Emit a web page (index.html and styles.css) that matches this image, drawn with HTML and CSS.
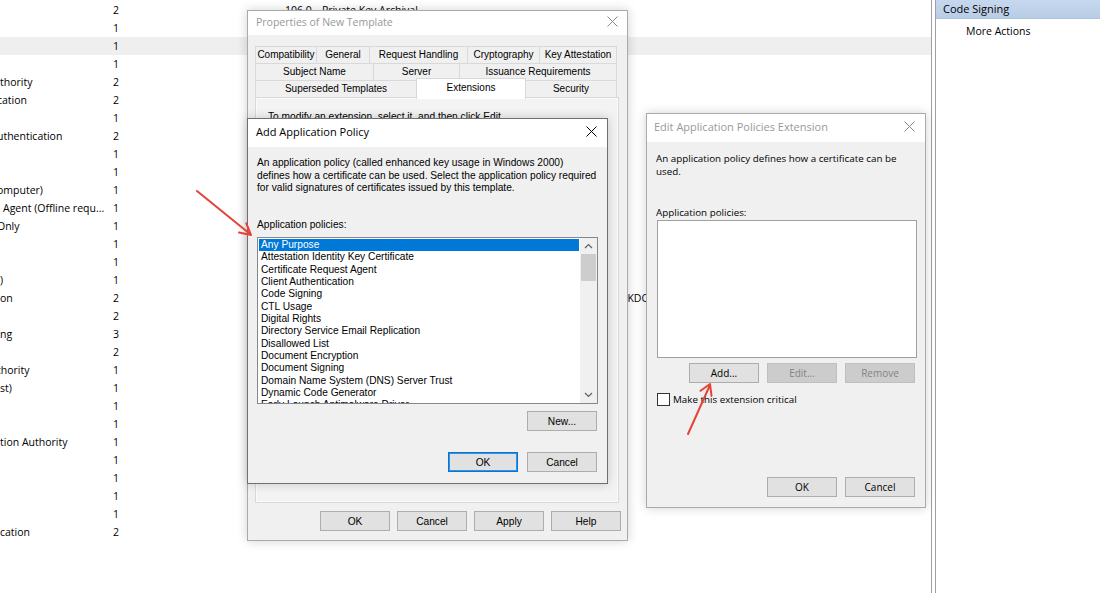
FILE: index.html
```html
<!DOCTYPE html>
<html lang="en">
<head>
    <meta charset="UTF-8">
    <title>Certificate Templates</title>
    <link rel="stylesheet" href="styles.css">
</head>
<body>

    <div class="escritorio">
        <div class="consola">
            <div class="lista">
                <div class="fila"><span class="nombre"></span><span class="num">2</span><span class="ver">106.0</span><span class="uso">Private Key Archival</span></div>
                <div class="fila"><span class="nombre"></span><span class="num">1</span><span class="ver"></span><span class="uso"></span></div>
                <div class="fila sel"><span class="nombre"></span><span class="num">1</span><span class="ver"></span><span class="uso"></span></div>
                <div class="fila"><span class="nombre"></span><span class="num">1</span><span class="ver"></span><span class="uso"></span></div>
                <div class="fila"><span class="nombre">thority</span><span class="num">2</span><span class="ver"></span><span class="uso"></span></div>
                <div class="fila"><span class="nombre"><span class="cut">cation</span></span><span class="num">2</span><span class="ver"></span><span class="uso"></span></div>
                <div class="fila"><span class="nombre"></span><span class="num">1</span><span class="ver"></span><span class="uso"></span></div>
                <div class="fila"><span class="nombre"><span class="cut">uthentication</span></span><span class="num">2</span><span class="ver"></span><span class="uso"></span></div>
                <div class="fila"><span class="nombre"></span><span class="num">1</span><span class="ver"></span><span class="uso"></span></div>
                <div class="fila"><span class="nombre"></span><span class="num">1</span><span class="ver"></span><span class="uso"></span></div>
                <div class="fila"><span class="nombre"><span class="cut">omputer)</span></span><span class="num">1</span><span class="ver"></span><span class="uso"></span></div>
                <div class="fila"><span class="nombre"><span class="sp">Agent (Offline requ...</span></span><span class="num">1</span><span class="ver"></span><span class="uso"></span></div>
                <div class="fila"><span class="nombre"><span class="cut">Only</span></span><span class="num">1</span><span class="ver"></span><span class="uso"></span></div>
                <div class="fila"><span class="nombre"></span><span class="num">1</span><span class="ver"></span><span class="uso"></span></div>
                <div class="fila"><span class="nombre"></span><span class="num">1</span><span class="ver"></span><span class="uso"></span></div>
                <div class="fila"><span class="nombre">)</span><span class="num">1</span><span class="ver"></span><span class="uso"></span></div>
                <div class="fila"><span class="nombre">on</span><span class="num">2</span><span class="ver"></span><span class="uso"><span class="kdc">Client Authentication, Server Authentication, Smart Card Logon, KDC Authentication</span></span></div>
                <div class="fila"><span class="nombre"></span><span class="num">2</span><span class="ver"></span><span class="uso"></span></div>
                <div class="fila"><span class="nombre">ng</span><span class="num">3</span><span class="ver"></span><span class="uso"></span></div>
                <div class="fila"><span class="nombre"></span><span class="num">2</span><span class="ver"></span><span class="uso"></span></div>
                <div class="fila"><span class="nombre"><span class="cut">thority</span></span><span class="num">1</span><span class="ver"></span><span class="uso"></span></div>
                <div class="fila"><span class="nombre">st)</span><span class="num">1</span><span class="ver"></span><span class="uso"></span></div>
                <div class="fila"><span class="nombre"></span><span class="num">1</span><span class="ver"></span><span class="uso"></span></div>
                <div class="fila"><span class="nombre"></span><span class="num">1</span><span class="ver"></span><span class="uso"></span></div>
                <div class="fila"><span class="nombre">tion Authority</span><span class="num">1</span><span class="ver"></span><span class="uso"></span></div>
                <div class="fila"><span class="nombre"></span><span class="num">1</span><span class="ver"></span><span class="uso"></span></div>
                <div class="fila"><span class="nombre"></span><span class="num">1</span><span class="ver"></span><span class="uso"></span></div>
                <div class="fila"><span class="nombre"></span><span class="num">1</span><span class="ver"></span><span class="uso"></span></div>
                <div class="fila"><span class="nombre"></span><span class="num">1</span><span class="ver"></span><span class="uso"></span></div>
                <div class="fila"><span class="nombre">cation</span><span class="num">2</span><span class="ver"></span><span class="uso"></span></div>
            </div>
        </div>
        <div class="acciones">
            <div class="acc-cabecera">Code Signing</div>
            <div class="acc-item">More Actions</div>
        </div>
    </div>

    <!-- Properties of New Template -->
    <div class="ventana propiedades inactiva">
        <div class="titulo">
            <span>Properties of New Template</span>
            <svg class="cerrar" width="11" height="11" viewBox="0 0 11 11"><path d="M0.5 0.5L10.5 10.5M10.5 0.5L0.5 10.5"/></svg>
        </div>
        <div class="cuerpo-prop">
            <div class="pestanas">
                <div class="fila-pest">
                    <div class="pest p-compat">Compatibility</div>
                    <div class="pest p-general">General</div>
                    <div class="pest p-request">Request Handling</div>
                    <div class="pest p-crypto">Cryptography</div>
                    <div class="pest p-key">Key Attestation</div>
                </div>
                <div class="fila-pest">
                    <div class="pest p-subject">Subject Name</div>
                    <div class="pest p-server">Server</div>
                    <div class="pest p-issuance">Issuance Requirements</div>
                </div>
                <div class="fila-pest">
                    <div class="pest p-super">Superseded Templates</div>
                    <div class="pest p-ext activa">Extensions</div>
                    <div class="pest p-sec">Security</div>
                </div>
            </div>
            <div class="panel">
                <p>To modify an extension, select it, and then click Edit.</p>
            </div>
            <div class="botones-prop">
                <button class="boton">OK</button>
                <button class="boton">Cancel</button>
                <button class="boton">Apply</button>
                <button class="boton">Help</button>
            </div>
        </div>
    </div>

    <!-- Add Application Policy -->
    <div class="ventana agregar">
        <div class="titulo">
            <span>Add Application Policy</span>
            <svg class="cerrar" width="11" height="11" viewBox="0 0 11 11"><path d="M0.5 0.5L10.5 10.5M10.5 0.5L0.5 10.5"/></svg>
        </div>
        <div class="cuerpo-agregar">
            <p class="texto-ms parrafo">An application policy (called enhanced key usage in Windows 2000)<br>defines how a certificate can be used. Select the application policy required<br>for valid signatures of certificates issued by this template.</p>
            <p class="texto-ms etiqueta">Application policies:</p>
            <div class="listbox">
                <div class="items">
                    <div class="item sel">Any Purpose</div>
                    <div class="item">Attestation Identity Key Certificate</div>
                    <div class="item">Certificate Request Agent</div>
                    <div class="item">Client Authentication</div>
                    <div class="item">Code Signing</div>
                    <div class="item">CTL Usage</div>
                    <div class="item">Digital Rights</div>
                    <div class="item">Directory Service Email Replication</div>
                    <div class="item">Disallowed List</div>
                    <div class="item">Document Encryption</div>
                    <div class="item">Document Signing</div>
                    <div class="item">Domain Name System (DNS) Server Trust</div>
                    <div class="item">Dynamic Code Generator</div>
                    <div class="item">Early Launch Antimalware Driver</div>
                </div>
                <div class="scroll">
                    <div class="flecha"><svg width="9" height="6" viewBox="0 0 9 6"><path d="M1 5L4.5 1.5L8 5"/></svg></div>
                    <div class="pulgar"></div>
                    <div class="pista"></div>
                    <div class="flecha"><svg width="9" height="6" viewBox="0 0 9 6"><path d="M1 1L4.5 4.5L8 1"/></svg></div>
                </div>
            </div>
            <div class="fila-nuevo">
                <button class="boton">New...</button>
            </div>
            <div class="fila-ok">
                <button class="boton defecto">OK</button>
                <button class="boton">Cancel</button>
            </div>
        </div>
    </div>

    <!-- Edit Application Policies Extension -->
    <div class="ventana editar inactiva">
        <div class="titulo">
            <span>Edit Application Policies Extension</span>
            <svg class="cerrar" width="11" height="11" viewBox="0 0 11 11"><path d="M0.5 0.5L10.5 10.5M10.5 0.5L0.5 10.5"/></svg>
        </div>
        <div class="cuerpo-editar">
            <p>An application policy defines how a certificate can be<br>used.</p>
            <p class="etiqueta-ed">Application policies:</p>
            <div class="lista-vacia"></div>
            <div class="botones-ed">
                <button class="boton ui">Add...</button>
                <button class="boton ui" disabled>Edit...</button>
                <button class="boton ui" disabled>Remove</button>
            </div>
            <label class="critica"><span class="check"></span>Make this extension critical</label>
            <div class="botones-ed abajo">
                <button class="boton ui">OK</button>
                <button class="boton ui">Cancel</button>
            </div>
        </div>
    </div>

    <!-- flechas rojas de la captura -->
    <svg class="flechas" width="1100" height="593" viewBox="0 0 1100 593">
        <path d="M197 191L250 234M239 232.6L251 235L246.3 223.4"/>
        <path d="M688 434L710 385M700.5 390.8L710 384L711.5 395.6"/>
    </svg>

</body>
</html>
```

FILE: styles.css
```css
*{
    box-sizing: border-box;
}

body{
    margin: 0;
    width: 1100px;
    height: 593px;
    overflow: hidden;
    position: relative;
    background-color: #fff;
    font-family: "Open Sans", "Noto Sans", sans-serif;
    font-size: 10.5px;
    color: #000;
}

p{
    margin: 0;
}

/* consola de fondo */
.escritorio{
    display: flex;
    height: 593px;
}

.consola{
    width: 932px;
    border-right: 1px solid #a0a0a0;
    overflow: hidden;
}

.lista{
    padding-top: 1px;
}

.fila{
    display: flex;
    align-items: center;
    height: 18px;
    white-space: nowrap;
}

.fila.sel{
    background-color: #efefef;
}

.nombre{
    width: 113px;
    overflow: hidden;
}

.cut{
    margin-left: -3px;
}

.sp{
    margin-left: 3px;
}

.num{
    width: 172px;
}

.ver{
    width: 37px;
}

.uso{
    flex: 1;
    overflow: hidden;
}

.kdc{
    margin-left: -8px;
}

.acciones{
    flex: 1;
    margin-left: 3px;
    border-left: 1px solid #a0a0a0;
}

.acc-cabecera{
    height: 19px;
    line-height: 18px;
    padding-left: 7px;
    background: linear-gradient(#c6d8ee, #b8cde6);
    border-bottom: 1px solid #aec3dc;
    font-size: 11px;
}

.acc-item{
    height: 23px;
    line-height: 24px;
    padding-left: 30px;
}

/* ventanas */
.ventana{
    position: absolute;
    display: flex;
    flex-direction: column;
    background-color: #f0f0f0;
    border: 1px solid #6f6f6f;
    box-shadow: 0 0 10px rgba(0, 0, 0, 0.18);
}

.ventana.inactiva{
    border-color: #aaaaaa;
}

.titulo{
    flex: none;
    display: flex;
    align-items: center;
    justify-content: space-between;
    height: 28px;
    padding: 0 10px 3px 8px;
    background-color: #fff;
    font-size: 11px;
}

.cerrar path{
    stroke: #000;
    stroke-width: 1;
    fill: none;
}

.inactiva .titulo{
    color: #999;
}

.inactiva .cerrar path{
    stroke: #888;
}

.boton{
    width: 70px;
    height: 20px;
    padding: 0;
    background-color: #e1e1e1;
    border: 1px solid #adadad;
    font-family: "Liberation Sans", Arial, sans-serif;
    font-size: 10.2px;
    color: #000;
}

.boton.ui{
    font-family: "Open Sans", "Noto Sans", sans-serif;
    font-size: 10px;
}

.boton:disabled{
    background-color: #cccccc;
    border-color: #bfbfbf;
    color: #838383;
}

.boton.defecto{
    border-color: #0078d7;
    box-shadow: inset 0 0 0 1px #3b8fdb;
}

/* Properties of New Template */
.propiedades{
    left: 247px;
    top: 10px;
    width: 381px;
    height: 531px;
}

.propiedades .titulo{
    height: 24px;
    padding-right: 9px;
    font-size: 10.5px;
}

.cuerpo-prop{
    flex: 1;
    display: flex;
    flex-direction: column;
    padding: 11px 8px 9px 7px;
}

.pestanas{
    font-family: "Liberation Sans", Arial, sans-serif;
    font-size: 10px;
    position: relative;
    z-index: 1;
}

.fila-pest{
    display: flex;
    height: 17px;
}

.pest{
    height: 18px;
    line-height: 16px;
    margin-left: -1px;
    text-align: center;
    white-space: nowrap;
    border: 1px solid #d9d9d9;
    background-color: #f0f0f0;
}

.pest:first-child{
    margin-left: 0;
}

.pest.activa{
    height: 21px;
    margin-top: -2px;
    line-height: 18px;
    background-color: #fff;
    border-bottom: none;
    position: relative;
}

.p-compat{ width: 62px; }
.p-general{ width: 54px; }
.p-request{ width: 99px; }
.p-crypto{ width: 73px; }
.p-key{ width: 78px; }
.p-subject{ width: 119px; }
.p-server{ width: 87px; }
.p-issuance{ width: 158px; }
.p-super{ width: 162px; }
.p-ext{ width: 110px; }
.p-sec{ width: 92px; }

.panel{
    flex: 1;
    border: 1px solid #d9d9d9;
    box-shadow: inset 0 0 0 1px #fafafa;
    background-color: #f3f3f3;
    padding: 13px 12px;
    font-family: "Liberation Sans", Arial, sans-serif;
    font-size: 10.2px;
}

.botones-prop{
    display: flex;
    justify-content: flex-end;
    gap: 7px;
    margin-top: 8px;
    margin-right: -2px;
}

/* Add Application Policy */
.agregar{
    left: 247px;
    top: 118px;
    width: 361px;
    height: 366px;
    z-index: 2;
}

.cuerpo-agregar{
    flex: 1;
    padding: 10px 9px 0 9px;
}

.texto-ms{
    font-family: "Liberation Sans", Arial, sans-serif;
    font-size: 10.2px;
    line-height: 12.5px;
}

.parrafo{
    white-space: nowrap;
}

.etiqueta{
    margin-top: 24px;
}

.listbox{
    display: flex;
    width: 341px;
    height: 167px;
    margin-top: 6px;
    background-color: #fff;
    border: 1px solid #828790;
}

.items{
    flex: 1;
    padding: 1px;
    overflow: hidden;
    font-family: "Liberation Sans", Arial, sans-serif;
    font-size: 10.2px;
}

.item{
    height: 12.35px;
    line-height: 12.35px;
    padding-left: 2px;
    white-space: nowrap;
}

.item.sel{
    background-color: #0078d7;
    color: #fff;
}

.scroll{
    width: 17px;
    display: flex;
    flex-direction: column;
    background-color: #f0f0f0;
}

.flecha{
    height: 16px;
    display: flex;
    align-items: center;
    justify-content: center;
}

.flecha path{
    stroke: #606060;
    stroke-width: 1.2;
    fill: none;
}

.pulgar{
    height: 27px;
    margin: 0 1px;
    background-color: #cdcdcd;
}

.pista{
    flex: 1;
}

.fila-nuevo{
    display: flex;
    justify-content: flex-end;
    margin-top: 7px;
    padding-right: 1px;
}

.fila-ok{
    display: flex;
    justify-content: flex-end;
    gap: 9px;
    margin-top: 21px;
    padding-right: 1px;
}

/* Edit Application Policies Extension */
.editar{
    left: 646px;
    top: 113px;
    width: 280px;
    height: 395px;
}

.editar .titulo{
    padding-left: 7px;
}

.cuerpo-editar{
    flex: 1;
    display: flex;
    flex-direction: column;
    padding: 10px 8px 10px 9px;
    font-size: 9.8px;
    line-height: 13px;
}

.etiqueta-ed{
    margin-top: 28px;
}

.lista-vacia{
    height: 138px;
    margin: 1px 0 0 1px;
    background-color: #fff;
    border: 1px solid #a0a0a0;
}

.botones-ed{
    display: flex;
    justify-content: flex-end;
    gap: 8px;
    margin-top: 5px;
    padding-right: 2px;
}

.botones-ed.abajo{
    margin-top: auto;
}

.critica{
    display: flex;
    align-items: center;
    gap: 3px;
    margin: 10px 0 0 1px;
}

.check{
    width: 13px;
    height: 13px;
    border: 1px solid #333;
    background-color: #fff;
}

/* flechas */
.flechas{
    position: absolute;
    left: 0;
    top: 0;
    z-index: 5;
    pointer-events: none;
}

.flechas path{
    stroke: #e5433a;
    stroke-width: 2;
    fill: none;
    stroke-linecap: round;
    stroke-linejoin: round;
}
```
